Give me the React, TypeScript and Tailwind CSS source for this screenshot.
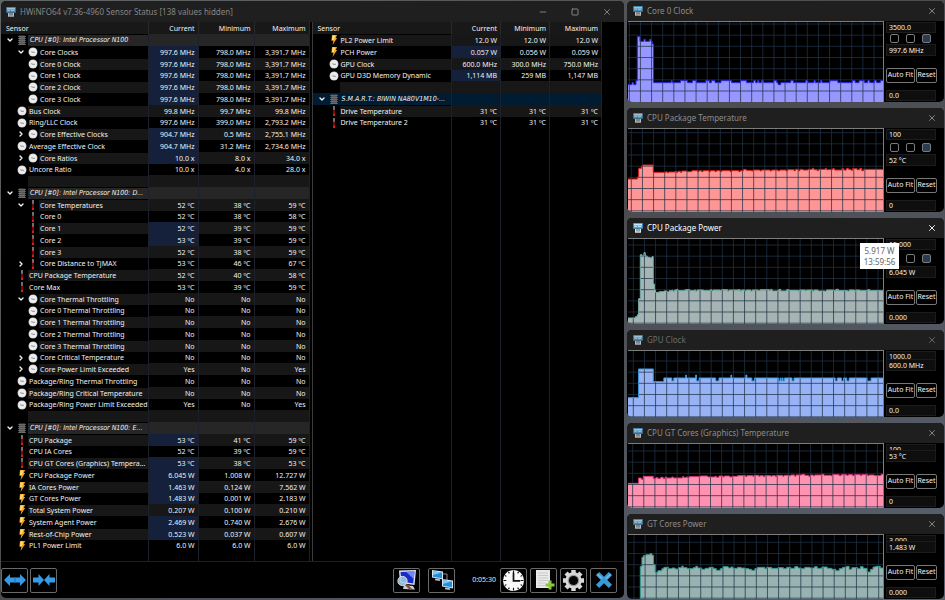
import React from "react";
import { ChevronDown, ChevronRight, Minus, Square, X } from "lucide-react";

type IconKind = "clock" | "temp" | "power" | "chip";
type Row = {
  name: string;
  icon?: IconKind;
  kind?: "group" | "blank" | "smart";
  sub?: boolean;
  open?: boolean;
  closed?: boolean;
  hot?: boolean;
  values?: [string, string, string];
};

function item(icon: IconKind, name: string, a: string, b: string, c: string, extra: Partial<Row> = {}): Row {
  return { name, icon, values: [a, b, c], ...extra };
}
const group = (name: string): Row => ({ name, icon: "chip", kind: "group", open: true });
const blank: Row = { name: "", kind: "blank" };
const sub = { sub: true };
const hot = { hot: true };

const leftRows: Row[] = [
  group("CPU [#0]: Intel Processor N100"),
  item("clock", "Core Clocks", "997.6 MHz", "798.0 MHz", "3,391.7 MHz", { ...sub, ...hot, open: true }),
  item("clock", "Core 0 Clock", "997.6 MHz", "798.0 MHz", "3,391.7 MHz", { ...sub, ...hot }),
  item("clock", "Core 1 Clock", "997.6 MHz", "798.0 MHz", "3,391.7 MHz", { ...sub, ...hot }),
  item("clock", "Core 2 Clock", "997.6 MHz", "798.0 MHz", "3,391.7 MHz", { ...sub, ...hot }),
  item("clock", "Core 3 Clock", "997.6 MHz", "798.0 MHz", "3,391.7 MHz", { ...sub, ...hot }),
  item("clock", "Bus Clock", "99.8 MHz", "99.7 MHz", "99.8 MHz"),
  item("clock", "Ring/LLC Clock", "997.6 MHz", "399.0 MHz", "2,793.2 MHz"),
  item("clock", "Core Effective Clocks", "904.7 MHz", "0.5 MHz", "2,755.1 MHz", { ...sub, ...hot, closed: true }),
  item("clock", "Average Effective Clock", "904.7 MHz", "31.2 MHz", "2,734.6 MHz", hot),
  item("clock", "Core Ratios", "10.0 x", "8.0 x", "34.0 x", { ...sub, ...hot, closed: true }),
  item("clock", "Uncore Ratio", "10.0 x", "4.0 x", "28.0 x"),
  blank,
  group("CPU [#0]: Intel Processor N100: D..."),
  item("temp", "Core Temperatures", "52 ºC", "38 ºC", "59 ºC", { ...sub, open: true }),
  item("temp", "Core 0", "52 ºC", "38 ºC", "58 ºC", sub),
  item("temp", "Core 1", "52 ºC", "39 ºC", "59 ºC", { ...sub, ...hot }),
  item("temp", "Core 2", "53 ºC", "39 ºC", "59 ºC", { ...sub, ...hot }),
  item("temp", "Core 3", "52 ºC", "38 ºC", "59 ºC", sub),
  item("temp", "Core Distance to TjMAX", "53 ºC", "46 ºC", "67 ºC", { ...sub, closed: true }),
  item("temp", "CPU Package Temperature", "52 ºC", "40 ºC", "58 ºC"),
  item("temp", "Core Max", "53 ºC", "39 ºC", "59 ºC"),
  item("clock", "Core Thermal Throttling", "No", "No", "No", { ...sub, open: true }),
  item("clock", "Core 0 Thermal Throttling", "No", "No", "No", sub),
  item("clock", "Core 1 Thermal Throttling", "No", "No", "No", sub),
  item("clock", "Core 2 Thermal Throttling", "No", "No", "No", sub),
  item("clock", "Core 3 Thermal Throttling", "No", "No", "No", sub),
  item("clock", "Core Critical Temperature", "No", "No", "No", { ...sub, closed: true }),
  item("clock", "Core Power Limit Exceeded", "Yes", "No", "Yes", { ...sub, closed: true }),
  item("clock", "Package/Ring Thermal Throttling", "No", "No", "No"),
  item("clock", "Package/Ring Critical Temperature", "No", "No", "No"),
  item("clock", "Package/Ring Power Limit Exceeded", "Yes", "No", "Yes"),
  blank,
  group("CPU [#0]: Intel Processor N100: E..."),
  item("temp", "CPU Package", "53 ºC", "41 ºC", "59 ºC", hot),
  item("temp", "CPU IA Cores", "52 ºC", "39 ºC", "59 ºC"),
  item("temp", "CPU GT Cores (Graphics) Tempera...", "53 ºC", "38 ºC", "53 ºC", hot),
  item("power", "CPU Package Power", "6.045 W", "1.008 W", "12.727 W", hot),
  item("power", "IA Cores Power", "1.463 W", "0.124 W", "7.562 W", hot),
  item("power", "GT Cores Power", "1.483 W", "0.001 W", "2.183 W", hot),
  item("power", "Total System Power", "0.207 W", "0.100 W", "0.210 W"),
  item("power", "System Agent Power", "2.469 W", "0.740 W", "2.676 W", hot),
  item("power", "Rest-of-Chip Power", "0.523 W", "0.037 W", "0.607 W", hot),
  item("power", "PL1 Power Limit", "6.0 W", "6.0 W", "6.0 W"),
];

const rightRows: Row[] = [
  item("power", "PL2 Power Limit", "12.0 W", "12.0 W", "12.0 W"),
  item("power", "PCH Power", "0.057 W", "0.056 W", "0.059 W", hot),
  item("clock", "GPU Clock", "600.0 MHz", "300.0 MHz", "750.0 MHz"),
  item("clock", "GPU D3D Memory Dynamic", "1,114 MB", "259 MB", "1,147 MB", hot),
  blank,
  { name: "S.M.A.R.T.: BIWIN NA80V1M10-...", icon: "chip", kind: "smart", open: true },
  item("temp", "Drive Temperature", "31 ºC", "31 ºC", "31 ºC"),
  item("temp", "Drive Temperature 2", "31 ºC", "31 ºC", "31 ºC"),
];

function SensorIcon({ kind }: { kind: IconKind }) {
  if (kind === "clock")
    return (
      <svg viewBox="0 0 10 10" className="size-2.5" aria-hidden="true">
        <circle cx="5" cy="5" r="4.5" fill="#b9b9b9" />
        <circle cx="5" cy="5" r="3.9" fill="#ececec" />
        <path d="M3.2 4.700 5 5.300h1.900" fill="none" stroke="#777" strokeWidth=".8" />
      </svg>
    );
  if (kind === "temp")
    return (
      <svg viewBox="0 0 10 10" className="size-2.5" aria-hidden="true">
        <path d="M4.500 0h1v4h-1Z" fill="#e0e0e0" />
        <path d="M4.500 3h1v4.500h-1Z" fill="#e01818" />
        <path d="M4 7.500h2V10H4Z" fill="#e01818" />
      </svg>
    );
  if (kind === "power")
    return (
      <svg viewBox="0 0 10 10" className="size-2.5" aria-hidden="true">
        <path d="M3 0h5L6.800 3h1.300L3.600 10l.8-4.200H2.400Z" fill="#f6a21c" />
        <path d="M3.600.5h2.600L5 5H3Z" fill="#ffdc78" />
      </svg>
    );
  return (
    <svg viewBox="0 0 10 10" className="size-2.5" aria-hidden="true">
      <rect x="2" y=".5" width="6" height="9.500" fill="#555" />
      <path d="M1.200 1.500h7.600M1.200 3.500h7.600M1.200 5.500h7.600M1.200 7.500h7.600M1.200 9.500h7.600" stroke="#6e6e6e" strokeWidth=".9" />
    </svg>
  );
}

function AppIcon({ dim }: { dim?: boolean }) {
  return (
    <svg viewBox="0 0 10 10" className={dim ? "size-2.5 shrink-0 opacity-80" : "size-2.5 shrink-0"} aria-hidden="true">
      <rect x=".2" y="0" width="9.6" height="5.8" rx=".6" fill="#4ba3d8" />
      <path d="M1 1h8v1.6H1Z" fill="#c4e6f8" />
      <path d="M1.4 3.6h2.4M5 3.6h3.4" stroke="#e8f6ff" strokeWidth=".8" />
      <path d="M2 6h6v3.7H2Z" fill="#e4e4e4" />
      <path d="M4 6v2.6M6 6v2.6" stroke="#333" strokeWidth=".8" />
    </svg>
  );
}

function SensorTable({ rows, label, widths }: { rows: Row[]; label: string; widths: [string, string, string] }) {
  return (
    <table
      aria-label={label}
      className="h-full w-full table-fixed border-separate border-spacing-0 text-[7px] leading-[11px] text-[#f2f2f2] [&_td]:border-r [&_td]:border-[#1b202a] [&_td]:p-0 [&_th]:border-r [&_th]:border-[#2b2b2b] [&_th]:p-0 [&_th]:font-normal"
    >
      <colgroup>
        <col />
        {widths.map((w, i) => (
          <col key={i} className={w} />
        ))}
      </colgroup>
      <thead>
        <tr className="h-3 bg-[#181818]">
          <th className="text-left">
            <span className="pl-[5px]">Sensor</span>
          </th>
          {["Current", "Minimum", "Maximum"].map((h) => (
            <th key={h} className="text-right">
              <span className="pr-[3px]">{h}</span>
            </th>
          ))}
        </tr>
      </thead>
      <tbody className="[&_tr:nth-child(4n)]:h-[11px]">
        {rows.map((r, i) => {
          const bg =
            r.kind === "smart" ? "bg-[#001c33]" : r.kind === "group" ? "bg-[#262626]" : i % 2 === 0 ? "bg-[#171717]" : "bg-black";
          const Chevron = r.open ? ChevronDown : ChevronRight;
          return (
            <tr key={i} className={`h-3 ${bg}`}>
              <td className={r.kind === "smart" ? "" : "bg-black"}>
                <div className={`flex h-[11px] items-center ${r.sub ? "pl-3.5" : "pl-[3px]"}`}>
                  <span className="flex w-3 shrink-0 justify-center">
                    {(r.open || r.closed) && (
                      <button aria-label={`Toggle ${r.name}`} className="block">
                        <Chevron className="size-2" strokeWidth={4} />
                      </button>
                    )}
                  </span>
                  <span className="flex w-3 shrink-0 justify-center">{r.icon && <SensorIcon kind={r.icon} />}</span>
                  <span
                    className={`h-full min-w-0 flex-1 whitespace-nowrap ${bg} ${r.kind ? "pl-0.5 font-['DejaVu_Sans_Condensed','DejaVu_Sans',sans-serif] italic" : "pl-px"}`}
                  >
                    {r.name}
                  </span>
                </div>
              </td>
              {[0, 1, 2].map((c) => (
                <td key={c} className={`text-right ${c === 0 && r.hot ? "bg-[#15203a]" : ""}`}>
                  <span className="pr-[3px]">{r.values?.[c]}</span>
                </td>
              ))}
            </tr>
          );
        })}
        <tr className="!h-full">
          <td />
          <td />
          <td />
          <td />
        </tr>
      </tbody>
    </table>
  );
}

function ToolButton({ label, children }: { label: string; children: React.ReactNode }) {
  return (
    <button
      aria-label={label}
      className="flex h-[25px] w-[27px] shrink-0 items-center justify-center rounded-xs border border-[#6a6a6a] bg-black"
    >
      {children}
    </button>
  );
}

function Monitor({ x, y, s }: { x: number; y: number; s: number }) {
  return (
    <g transform={`translate(${x} ${y}) scale(${s})`}>
      <path d="M0 0 11 1.4v8L0 7.6Z" fill="#d7e3ec" />
      <path d="m1 1.2 9 1.2v5.8L1 6.7Z" fill="#1f8fe0" />
      <path d="m1 1.2 9 1.2L1 5Z" fill="#7cc8f8" />
      <path d="m3.5 8.4 4 .7.8 2-5.6-.8Z" fill="#b9c4cc" />
    </g>
  );
}

function Toolbar() {
  return (
    <div className="flex h-[37px] shrink-0 items-center border-t border-[#1e1e1e] pr-[7px]">
      <div className="flex gap-0.5">
        <ToolButton label="Expand columns">
          <svg viewBox="0 0 24 14" className="w-6">
            <path d="M1 7 7 1v3.600h10V1l6 6-6 6V9.400H7V13Z" fill="#359be8" />
            <path d="M12 4v6" stroke="#1c6cb0" />
          </svg>
        </ToolButton>
        <ToolButton label="Shrink columns">
          <svg viewBox="0 0 24 14" className="w-6">
            <path d="M12 7 6.500 1v3.600H1v4.800h5.500V13ZM12 7l5.500-6v3.600H23v4.800h-5.500V13Z" fill="#359be8" />
          </svg>
        </ToolButton>
      </div>
      <div className="ml-auto flex gap-2">
        <ToolButton label="System summary">
          <svg viewBox="0 0 24 22" className="w-6">
            <path d="M4 1.500 21 1l-1.500 15L5 14Z" fill="#dce3ea" />
            <path d="m5.500 3 14-.6-1.300 12L6.500 12.600Z" fill="#1a2cc8" />
            <path d="m11 2.800 8.500-.4-.8 7.600Z" fill="#7186f2" />
            <path d="m9 16 9 1 2 3.500-12-.5Z" fill="#c9ced3" />
            <circle cx="7.500" cy="12" r="4.600" fill="#9fc6e8" fillOpacity=".9" stroke="#dde6ee" />
            <path d="m11 15.500 5 5" stroke="#8a4a2c" strokeWidth="2.400" />
          </svg>
        </ToolButton>
        <ToolButton label="Remote monitoring">
          <svg viewBox="0 0 24 22" className="w-6">
            <path d="M12 5h5v6" fill="none" stroke="#8a8a8a" />
            <Monitor x={2} y={1} s={1} />
            <Monitor x={12} y={10} s={1} />
          </svg>
        </ToolButton>
      </div>
      <time className="w-[45px] pr-1 text-right text-[7px] text-[#e8e8e8]">0:05:30</time>
      <div className="flex gap-[3px]">
        <ToolButton label="Reset timer">
          <svg viewBox="0 0 24 24" className="size-[23px]">
            <circle cx="12" cy="12" r="11" fill="#fafafa" />
            <path d="M12 1.500v3M12 19.500v3M1.500 12h3M19.500 12h3M6.700 2.900l1 1.700M17.300 2.900l-1 1.700M6.700 21.100l1-1.700M17.300 21.100l-1-1.700M2.900 6.700l1.700 1M21.100 6.700l-1.700 1M2.900 17.300l1.700-1M21.100 17.300l-1.700-1" stroke="#111" strokeWidth="1.200" />
            <path d="M12 4v8.500h7" fill="none" stroke="#111" strokeWidth="1.800" />
          </svg>
        </ToolButton>
        <ToolButton label="Start logging">
          <svg viewBox="0 0 24 22" className="w-6">
            <path d="M4 1h14v18H4Z" fill="#e9e9e9" />
            <path d="M6 4h10M6 6.500h10M6 9h10M6 11.500h10M6 14h7M6 16.500h7" stroke="#c9c9c9" />
            <path d="M18 11.500v9M13.500 16h9" stroke="#8cc63c" strokeWidth="3" />
          </svg>
        </ToolButton>
        <ToolButton label="Settings">
          <svg viewBox="0 0 24 24" className="size-[23px]">
            <g stroke="#d8d8d8" strokeWidth="4.600">
              <path d="M12 1v22M1 12h22M4.200 4.200l15.600 15.600M19.800 4.200 4.200 19.800" />
            </g>
            <circle cx="12" cy="12" r="8.500" fill="#d8d8d8" />
            <circle cx="12" cy="12" r="6" fill="#9a9a9a" />
            <circle cx="12" cy="12" r="4.800" fill="#050505" />
          </svg>
        </ToolButton>
        <ToolButton label="Close sensors">
          <svg viewBox="0 0 24 24" className="size-[22px]">
            <path d="m5 5 14 14M19 5 5 19" stroke="#3a9ad8" strokeWidth="5" />
            <path d="m4.500 5.500 5.500 5M19.500 5.500l-5.500 5" stroke="#6abcea" strokeWidth="1.500" />
          </svg>
        </ToolButton>
      </div>
    </div>
  );
}

type Chart = {
  title: string;
  active?: boolean;
  dim?: boolean;
  max: string;
  value: string;
  min: string;
  height: string;
  top: number;
  span: number;
  gridX: number;
  gridY: number;
  fill: string;
  stroke: string;
  tip?: [string, string];
  data: string;
};

// Each series is a run of "x,y" samples drawn as steps, three units to a pixel.
const charts: Chart[] = [
  {
    title: "Core 0 Clock", max: "3500.0", value: "997.6 MHz", min: "0.0", height: "h-[81px]",
    top: 64, span: 240, gridX: 22, gridY: 70, fill: "#9797ff", stroke: "#2c2ce8",
    data: "18,252 30,246 35,252 42,240 46,108 54,122 66,116 70,122 83,116 87,122 91,130 95,246 148,240 151,246 176,240 197,246 212,240 224,246 252,240 263,246 269,240 280,246 298,240 330,246 357,240 375,246 396,240 402,246 408,240 412,246 420,240 426,246 457,240 466,246 470,252 478,246 508,240 516,246 553,240 560,246 578,240 582,246 598,240 602,246 626,240 650,246 694,240 702,246 714,240 730,246 740,240 746,246 760,240 766,246 778,240",
  },
  {
    title: "CPU Package Temperature", max: "100", value: "52 °C", min: "0", height: "h-[84px]",
    top: 72, span: 249, gridX: 28, gridY: 83, fill: "#ff9696", stroke: "#d81c1c",
    data: "18,222 46,216 50,190 58,184 62,180 94,202 132,200 136,203 140,201 160,199 164,202 168,199 176,202 180,198 196,200 210,197 228,200 232,197 240,200 244,197 262,200 266,197 280,200 284,197 296,200 300,197 326,200 330,197 352,200 356,197 366,193 374,196 390,198 394,195 416,198 420,195 446,198 450,195 470,198 474,195 494,198 498,194 518,197 522,193 532,197 536,193 545,195 560,193 573,190 578,194 588,197 592,193 612,190 616,194 634,191 640,195 662,191 668,195 676,190 682,193 690,196 694,191 708,194 716,190 722,197 728,193",
  },
  {
    title: "CPU Package Power", active: true, max: "15.000", value: "6.045 W", min: "0.000", height: "h-[86px]",
    top: 71, span: 255, gridX: 34, gridY: 89, fill: "#a6b4b3", stroke: "#75aeac", tip: ["5.917 W", "13:59:56"],
    data: "18,308 40,304 46,298 50,250 55,118 60,122 66,112 70,122 76,126 84,128 90,124 94,206 98,224 101,231 112,229 126,227 136,230 142,226 150,225 154,229 158,224 165,222 168,226 190,223 204,226 218,224 222,228 226,224 246,226 266,223 270,227 274,224 296,227 300,223 318,228 322,224 350,223 356,228 360,224 370,227 374,224 388,228 392,224 410,226 416,223 444,225 448,222 452,227 470,224 474,222 478,227 496,223 502,225 530,227 534,224 552,227 556,224 574,228 578,224 590,227 612,228 616,224 638,226 644,222 652,226 680,228 684,224 700,228 704,224 716,226 740,223 746,226",
  },
  {
    title: "GPU Clock", dim: true, max: "1000.0", value: "600.0 MHz", min: "0.0", height: "h-[67px]",
    top: 76, span: 198, gridX: 34, gridY: 106, fill: "#98b2f6", stroke: "#3b9ee8",
    data: "18,216 50,130 94,168 126,157 150,166 156,157 192,148 194,157 222,148 224,166 232,157 282,166 292,157 328,148 330,157 373,148 376,157 391,166 399,157 471,166 476,157 479,166 482,157 485,166 489,157 512,166 518,157 642,166 648,157 661,166 667,157 677,166 684,157 738,166 750,157",
  },
  {
    title: "CPU GT Cores (Graphics) Temperature", max: "100", value: "53 °C", min: "0", height: "h-[65px]",
    top: 72, span: 192, gridX: 32, gridY: 93, fill: "#ff92b0", stroke: "#e0387e",
    data: "18,190 50,174 58,178 64,169 94,176 102,173 108,176 116,172 124,176 130,171 134,174 150,171 154,174 182,170 186,173 194,171 198,174 202,170 236,168 258,171 280,169 284,172 292,168 304,171 308,168 324,171 332,169 348,167 372,170 376,167 394,169 398,166 412,169 416,167 426,170 430,167 448,169 452,167 462,170 466,166 484,169 488,166 504,168 508,165 520,169 524,165 542,163 550,166 562,169 568,165 576,168 580,165 602,163 608,166 630,168 634,164 654,167 660,164 676,166 682,164 694,167 700,164 718,167 722,164 740,167 744,165 760,167 780,163",
  },
  {
    title: "GT Cores Power", max: "3.000", value: "1.483 W", min: "0.000", height: "h-[65px]",
    top: 343, span: 192, gridX: 36, gridY: 365, fill: "#98b2b2", stroke: "#329c90",
    data: "18,540 55,437 60,410 64,405 72,402 84,399 90,404 95,432 100,455 108,450 120,444 126,440 140,444 150,442 160,445 170,441 180,436 184,441 196,444 214,441 222,437 228,442 240,446 250,443 262,440 275,444 284,449 296,444 304,438 320,442 328,439 334,443 348,440 358,442 370,444 382,446 390,449 400,444 408,440 430,444 436,440 450,443 470,441 486,444 496,440 508,443 520,438 530,442 540,444 550,440 566,442 580,438 588,443 602,439 618,443 632,446 644,450 654,444 664,440 676,437 684,446 692,441 710,444 718,438 726,443 738,454 748,446 756,439 764,437 778,442",
  },
];

function stepPath(data: string) {
  const points = data.split(" ").map((p) => p.split(",").map(Number));
  let d = `M${points[0][0]} ${points[0][1]}`;
  for (const [x, y] of points.slice(1)) d += `H${x}V${y}`;
  return `${d}H786`;
}

function lines(start: number, end: number) {
  const out: number[] = [];
  for (let v = start; v < end; v += 33.5) out.push(v);
  return out;
}

function ChartWindow({ chart: c }: { chart: Chart }) {
  const bottom = c.top + c.span;
  const d = stepPath(c.data);
  const grid =
    lines(c.gridX, 786).map((x) => `M${x} ${c.top}V${bottom}`).join("") +
    lines(c.gridY, bottom).map((y) => `M18 ${y}H786`).join("");
  const box = "block w-[50px] border border-[#1c1c1c] bg-[#0e0e0e] px-0.5 text-[7px] text-[#f2f2f2] outline-none";
  return (
    <section className="shrink-0 overflow-hidden rounded-[5px] bg-black">
      <header className={`flex h-5 items-center bg-[#1f1f1f] pr-[7px] pl-1.5 text-[8px] ${c.active ? "text-white" : c.dim ? "text-[#6c6c6c]" : "text-[#8c8c8c]"}`}>
        <AppIcon dim={!c.active} />
        <h2 className="pl-1">{c.title}</h2>
        <button aria-label={`Close ${c.title}`} className="ml-auto">
          <X className="size-2.5" strokeWidth={2.2} />
        </button>
      </header>
      <div className={`relative flex pl-px ${c.height}`}>
        <div className="min-w-0 flex-1 border-t border-r border-[#7d7d7d]">
          <svg viewBox={`18 ${c.top} 768 ${c.span}`} preserveAspectRatio="none" className="block h-full w-full" role="img" aria-label={`${c.title} history`}>
            <path d={`${d}V${bottom}H18Z`} fill={c.fill} />
            <path d={grid} fill="none" stroke="#203347" strokeOpacity=".75" strokeWidth="3" />
            <path d={d} fill="none" stroke={c.stroke} strokeWidth="3" />
          </svg>
        </div>
        <div className="flex w-[60px] shrink-0 flex-col pl-0.5">
          <div className="flex min-h-0 flex-1 flex-col overflow-hidden pt-px">
            <input aria-label="Maximum" defaultValue={c.max} className={`${box} h-[11px] shrink-0`} />
            <div className="flex flex-1 items-center gap-[7px] pl-1">
              {[0, 1, 2].map((n) => (
                <input
                  key={n}
                  type="checkbox"
                  aria-label={["Average", "Extremes", "Grid"][n]}
                  defaultChecked={n === 2}
                  className="size-[9px] shrink-0 appearance-none rounded-xs border border-[#7a7a7a] checked:bg-[#2a3c54]"
                />
              ))}
            </div>
          </div>
          <div className="flex shrink-0 flex-col pb-px">
            <input aria-label="Current value" readOnly value={c.value} className={`${box} h-3`} />
            <div className="flex gap-px pt-3 pb-[7px] text-[7px] text-[#f2f2f2]">
              <button className="h-[15px] w-[29px] rounded-xs border border-[#777] whitespace-nowrap">Auto Fit</button>
              <button className="h-[15px] w-[21px] rounded-xs border border-[#777]">Reset</button>
            </div>
            <input aria-label="Minimum" defaultValue={c.min} className={`${box} h-[11px]`} />
          </div>
        </div>
        {c.tip && (
          <div role="tooltip" className="absolute top-[5px] right-[45px] w-[39px] bg-white py-0.5 text-center text-[8px] leading-[11px] text-[#666]">
            {c.tip[0]}
            <br />
            {c.tip[1]}
          </div>
        )}
      </div>
    </section>
  );
}

export default function App() {
  return (
    <div className="grid h-screen grid-cols-[minmax(0,1fr)_317px] gap-[3px] overflow-hidden bg-linear-to-br from-[#626668] via-[#4a4c50] to-[#596170] px-px pt-px font-['Noto_Sans','Open_Sans',sans-serif]">
      <main className="mb-0.5 flex min-h-0 flex-col overflow-hidden rounded-[5px] bg-black">
        <header className="flex h-[21px] shrink-0 items-center bg-[#1f1f1f] pr-3 pl-[5px] text-[8px] text-[#858585]">
          <AppIcon dim />
          <h1 className="pl-1">HWiNFO64 v7.36-4960 Sensor Status [138 values hidden]</h1>
          <div className="ml-auto flex items-center gap-[23px]">
            <button aria-label="Minimize">
              <Minus className="size-2.5" strokeWidth={2.2} />
            </button>
            <button aria-label="Maximize">
              <Square className="size-2" strokeWidth={3} />
            </button>
            <button aria-label="Close">
              <X className="size-2.5" strokeWidth={2.2} />
            </button>
          </div>
        </header>
        <div className="grid min-h-0 flex-1 grid-cols-2">
          <div className="min-h-0 border-r border-[#3a3a3a] pr-0.5">
            <SensorTable label="CPU sensors" rows={leftRows} widths={["w-[50px]", "w-[56px]", "w-[55px]"]} />
          </div>
          <div className="min-h-0 pr-[22px]">
            <SensorTable label="GPU and drive sensors" rows={rightRows} widths={["w-[49px]", "w-[49px]", "w-[52px]"]} />
          </div>
        </div>
        <Toolbar />
      </main>
      <aside className="flex min-h-0 flex-col gap-1.5" aria-label="Sensor graphs">
        {charts.map((c) => (
          <ChartWindow key={c.title} chart={c} />
        ))}
      </aside>
    </div>
  );
}
